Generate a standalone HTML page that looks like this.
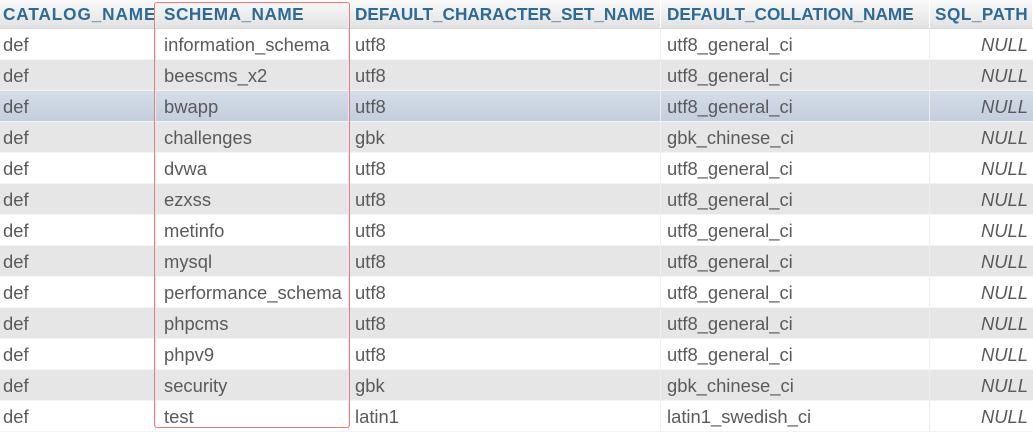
<!DOCTYPE html>
<html><head><style>
body{margin:0;width:1033px;height:429px;overflow:hidden;background:#fff;font-family:"Liberation Sans",sans-serif;position:relative}
.r{position:absolute;left:0;width:1033px;height:31px;box-sizing:border-box;border-bottom:1px solid #f4f4f4}
.c{position:absolute;top:0;height:100%;line-height:31px;font-size:18.4px;color:#5a5a5a;white-space:nowrap;box-sizing:border-box;border-right:1px solid #eee}
.h{height:29px;background:linear-gradient(#fafafa,#e2e2e2);border-bottom:1px solid #d8d8d8}
.h .c{line-height:29px;color:#2c6a97;font-weight:bold;font-size:17.2px;border-right:1px solid #fff}
.g{background:#e6e6e6}
.s{background:linear-gradient(#d5dde8,#c3cedd)}
.c1{left:0;width:156px;padding-left:3px}
.c2{left:156px;width:193px;padding-left:8px}
.c3{left:349px;width:312px;padding-left:6px}
.c4{left:661px;width:269px;padding-left:6px}
.c5{left:930px;width:103px;padding-right:5px;text-align:right;border-right:none}
.n{font-style:italic}
.box{position:absolute;left:154px;top:2px;width:196px;height:426px;box-sizing:border-box;border:1.5px solid #ee7a78;border-radius:3px}
</style></head><body>
<div class="r h" style="top:0"><div class="c c1" style="letter-spacing:0.9px">CATALOG_NAME</div><div class="c c2" style="letter-spacing:0.5px">SCHEMA_NAME</div><div class="c c3">DEFAULT_CHARACTER_SET_NAME</div><div class="c c4">DEFAULT_COLLATION_NAME</div><div class="c c5" style="text-align:left;padding-left:5px;letter-spacing:0.5px">SQL_PATH</div></div>
<div class="r" style="top:29px"><div class="c c1">def</div><div class="c c2">information_schema</div><div class="c c3">utf8</div><div class="c c4">utf8_general_ci</div><div class="c c5 n">NULL</div></div>
<div class="r g" style="top:60px"><div class="c c1">def</div><div class="c c2">beescms_x2</div><div class="c c3">utf8</div><div class="c c4">utf8_general_ci</div><div class="c c5 n">NULL</div></div>
<div class="r s" style="top:91px"><div class="c c1">def</div><div class="c c2">bwapp</div><div class="c c3">utf8</div><div class="c c4">utf8_general_ci</div><div class="c c5 n">NULL</div></div>
<div class="r g" style="top:122px"><div class="c c1">def</div><div class="c c2">challenges</div><div class="c c3">gbk</div><div class="c c4">gbk_chinese_ci</div><div class="c c5 n">NULL</div></div>
<div class="r" style="top:153px"><div class="c c1">def</div><div class="c c2">dvwa</div><div class="c c3">utf8</div><div class="c c4">utf8_general_ci</div><div class="c c5 n">NULL</div></div>
<div class="r g" style="top:184px"><div class="c c1">def</div><div class="c c2">ezxss</div><div class="c c3">utf8</div><div class="c c4">utf8_general_ci</div><div class="c c5 n">NULL</div></div>
<div class="r" style="top:215px"><div class="c c1">def</div><div class="c c2">metinfo</div><div class="c c3">utf8</div><div class="c c4">utf8_general_ci</div><div class="c c5 n">NULL</div></div>
<div class="r g" style="top:246px"><div class="c c1">def</div><div class="c c2">mysql</div><div class="c c3">utf8</div><div class="c c4">utf8_general_ci</div><div class="c c5 n">NULL</div></div>
<div class="r" style="top:277px"><div class="c c1">def</div><div class="c c2">performance_schema</div><div class="c c3">utf8</div><div class="c c4">utf8_general_ci</div><div class="c c5 n">NULL</div></div>
<div class="r g" style="top:308px"><div class="c c1">def</div><div class="c c2">phpcms</div><div class="c c3">utf8</div><div class="c c4">utf8_general_ci</div><div class="c c5 n">NULL</div></div>
<div class="r" style="top:339px"><div class="c c1">def</div><div class="c c2">phpv9</div><div class="c c3">utf8</div><div class="c c4">utf8_general_ci</div><div class="c c5 n">NULL</div></div>
<div class="r g" style="top:370px"><div class="c c1">def</div><div class="c c2">security</div><div class="c c3">gbk</div><div class="c c4">gbk_chinese_ci</div><div class="c c5 n">NULL</div></div>
<div class="r" style="top:401px"><div class="c c1">def</div><div class="c c2">test</div><div class="c c3">latin1</div><div class="c c4">latin1_swedish_ci</div><div class="c c5 n">NULL</div></div>
<div class="box"></div>
</body></html>
